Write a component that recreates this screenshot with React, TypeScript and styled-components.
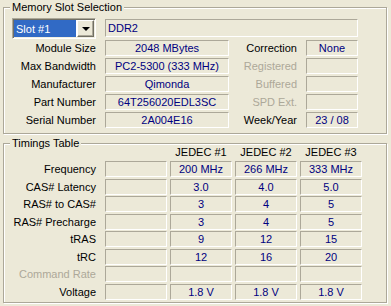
import React from "react";
import styled, { createGlobalStyle } from "styled-components";

const GlobalStyle = createGlobalStyle`
  html, body {
    margin: 0;
    padding: 0;
    background: #ece9d8;
  }
  body {
    font-family: "Liberation Sans", Arial, sans-serif;
    font-size: 11px;
    color: #000;
  }
`;

const spdRows = [
  { label: "Module Size", value: "2048 MBytes", side: "Correction", sideValue: "None", sideOff: false },
  { label: "Max Bandwidth", value: "PC2-5300 (333 MHz)", side: "Registered", sideValue: "", sideOff: true },
  { label: "Manufacturer", value: "Qimonda", side: "Buffered", sideValue: "", sideOff: true },
  { label: "Part Number", value: "64T256020EDL3SC", side: "SPD Ext.", sideValue: "", sideOff: true },
  { label: "Serial Number", value: "2A004E16", side: "Week/Year", sideValue: "23 / 08", sideOff: false },
];

const timings = [
  { label: "Frequency", values: ["200 MHz", "266 MHz", "333 MHz"] },
  { label: "CAS# Latency", values: ["3.0", "4.0", "5.0"] },
  { label: "RAS# to CAS#", values: ["3", "4", "5"] },
  { label: "RAS# Precharge", values: ["3", "4", "5"] },
  { label: "tRAS", values: ["9", "12", "15"] },
  { label: "tRC", values: ["12", "16", "20"] },
  { label: "Command Rate", values: ["", "", ""], off: true },
  { label: "Voltage", values: ["1.8 V", "1.8 V", "1.8 V"] },
];

const App: React.FC = () => {
  return (
    <>
      <GlobalStyle />
      <Window>
        <GroupBox>
          <Caption>Memory Slot Selection</Caption>
          <SlotGrid>
            <Combo>
              <ComboText>Slot #1</ComboText>
              <ComboButton>
                <Arrow />
              </ComboButton>
            </Combo>
            <TypeField>DDR2</TypeField>
            {spdRows.map((r) => (
              <React.Fragment key={r.label}>
                <Label>{r.label}</Label>
                <Field>{r.value}</Field>
                <Label $off={r.sideOff}>{r.side}</Label>
                <Field>{r.sideValue}</Field>
              </React.Fragment>
            ))}
          </SlotGrid>
        </GroupBox>

        <GroupBox $grow>
          <Caption>Timings Table</Caption>
          <TimingGrid>
            <span />
            <span />
            <ColHead>JEDEC #1</ColHead>
            <ColHead>JEDEC #2</ColHead>
            <ColHead>JEDEC #3</ColHead>
            {timings.map((t) => (
              <React.Fragment key={t.label}>
                <TimingLabel $off={t.off}>{t.label}</TimingLabel>
                <Field />
                {t.values.map((v, i) => (
                  <Field key={i}>{v}</Field>
                ))}
              </React.Fragment>
            ))}
          </TimingGrid>
        </GroupBox>
      </Window>
    </>
  );
};

const Window = styled.div`
  width: 391px;
  height: 306px;
  box-sizing: border-box;
  padding: 7px 4px 0 3px;
  display: flex;
  flex-direction: column;
  gap: 9px;
  background: #ece9d8;
`;

// etched group frame: grey line with a white line 1px below/right
const GroupBox = styled.div<{ $grow?: boolean }>`
  position: relative;
  border: 1px solid #aca899;
  box-shadow: inset 1px 1px 0 #fff, 1px 1px 0 #fff;
  padding: ${(p) => (p.$grow ? "0 0 0 8px" : "10px 0 5px 8px")};
  height: ${(p) => (p.$grow ? "158px" : "auto")};
`;

const Caption = styled.span`
  position: absolute;
  top: -7px;
  left: 6px;
  padding: 0 2px;
  line-height: 13px;
  background: #ece9d8;
  color: #000;
`;

const SlotGrid = styled.div`
  display: grid;
  grid-template-columns: 84px 124px 59px 52px;
  grid-template-rows: 20px repeat(5, 16px);
  column-gap: 9px;
  row-gap: 2px;
`;

const TimingGrid = styled.div`
  display: grid;
  grid-template-columns: 90px repeat(4, 62px);
  grid-template-rows: 15.5px repeat(8, 16px);
  column-gap: 3px;
  row-gap: 1.5px;
`;

const Label = styled.div<{ $off?: boolean }>`
  display: flex;
  align-items: center;
  justify-content: flex-end;
  white-space: nowrap;
  color: ${(p) => (p.$off ? "#aca899" : "#000")};
`;

const TimingLabel = styled(Label)`
  padding-right: 6px;
`;

const ColHead = styled.div`
  display: flex;
  align-items: center;
  justify-content: center;
  white-space: nowrap;
`;

const Field = styled.div`
  box-sizing: border-box;
  display: flex;
  align-items: center;
  justify-content: center;
  white-space: nowrap;
  overflow: hidden;
  border-style: solid;
  border-width: 1px;
  border-color: #aca899 #fff #fff #aca899;
  color: #000080;
`;

const TypeField = styled(Field)`
  grid-column: 2 / span 3;
  height: 18px;
  margin-top: 1px;
  justify-content: flex-start;
  padding-left: 2px;
`;

const Combo = styled.div`
  box-sizing: border-box;
  height: 21px;
  display: flex;
  gap: 1px;
  background: #fff;
  border: 1px solid;
  border-color: #aca899 #fff #fff #aca899;
  box-shadow: inset 1px 1px 0 #716f64, inset -1px -1px 0 #f1efe2;
  padding: 1px;
`;

const ComboText = styled.div`
  flex: 1;
  display: flex;
  align-items: center;
  padding-left: 2px;
  background: #316ac5;
  color: #fff;
`;

const ComboButton = styled.div`
  width: 17px;
  box-sizing: border-box;
  display: flex;
  align-items: center;
  justify-content: center;
  background: #ece9d8;
  border: 1px solid;
  border-color: #fff #716f64 #716f64 #fff;
  box-shadow: inset -1px -1px 0 #aca899;
`;

const Arrow = styled.div`
  width: 0;
  height: 0;
  border-left: 4px solid transparent;
  border-right: 4px solid transparent;
  border-top: 4px solid #000;
`;

export default App;
